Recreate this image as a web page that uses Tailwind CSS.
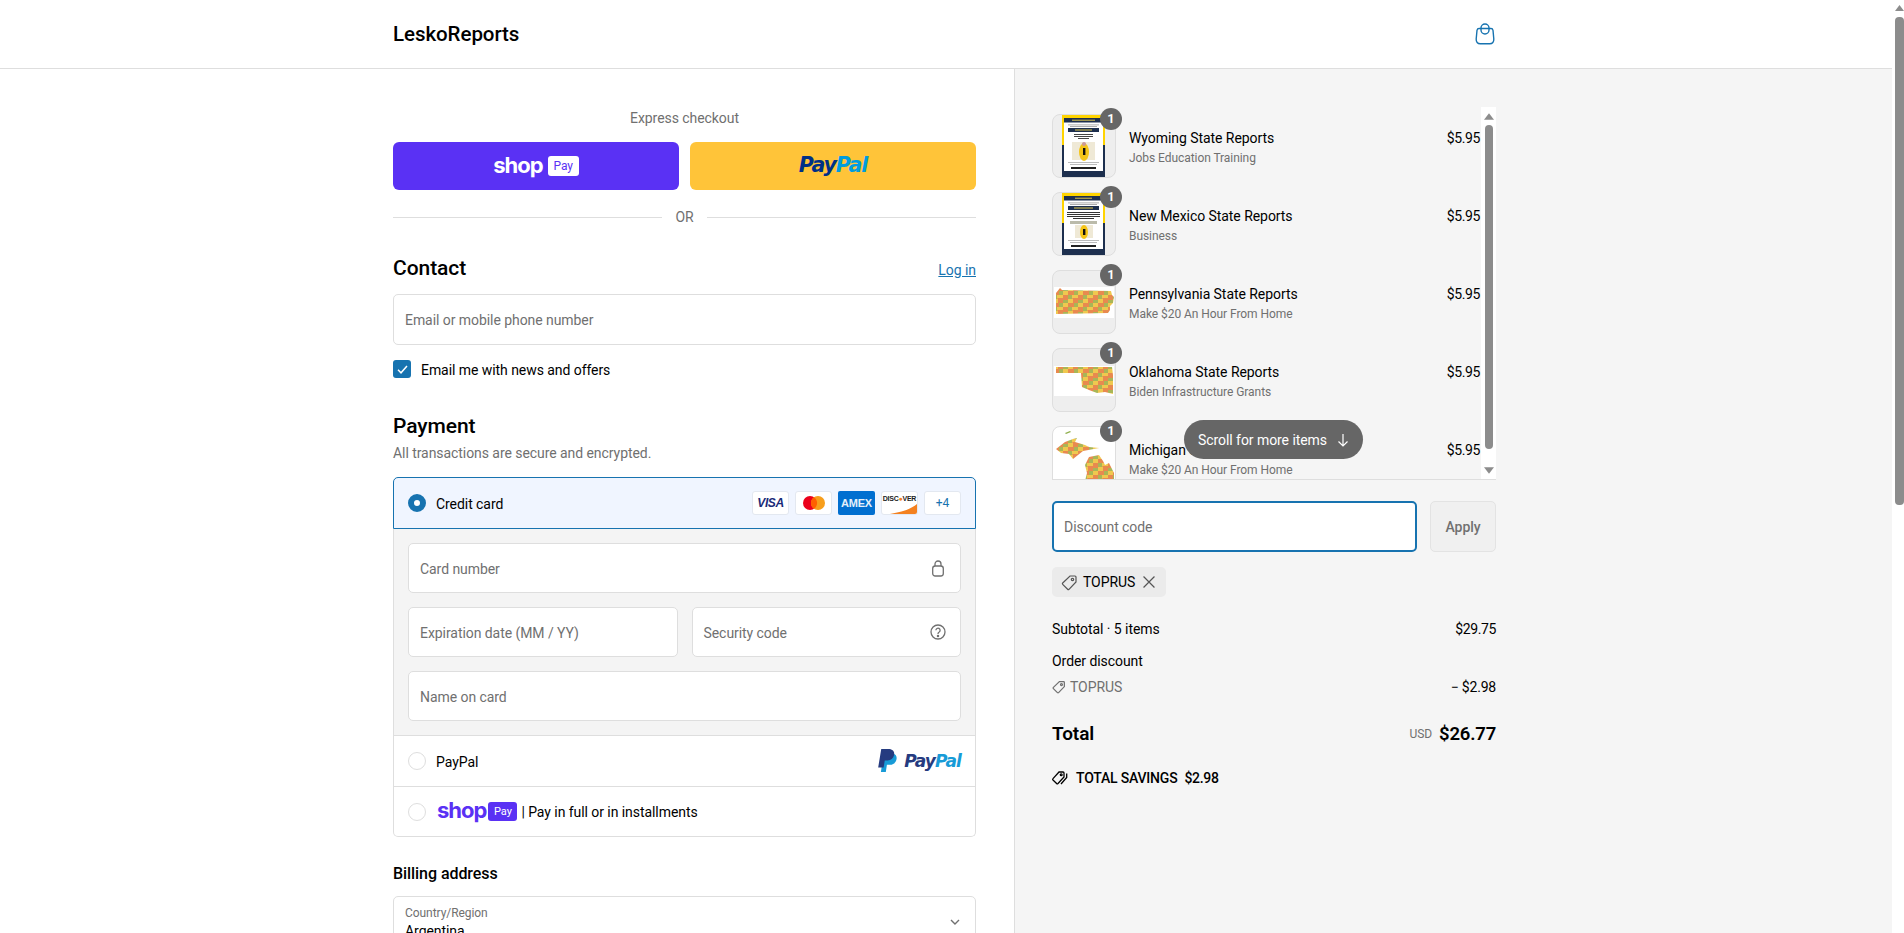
<!DOCTYPE html>
<html lang="en">
<head>
<meta charset="utf-8">
<title>Checkout</title>
<script src="https://cdn.jsdelivr.net/npm/@tailwindcss/browser@4"></script>
</head>
<body class="h-[933px] overflow-hidden bg-white font-['Roboto',sans-serif] text-[14px] leading-[20px] tracking-[-0.06px] text-black">
<svg class="absolute w-0 h-0" aria-hidden="true"><defs>
  <pattern id="counties" width="15" height="12" patternUnits="userSpaceOnUse">
    <rect width="15" height="12" fill="#eda04c"/>
    <rect x="0" y="0" width="4" height="4" fill="#a9b657"/><rect x="4" y="0" width="6" height="3" fill="#f0c850"/><rect x="10" y="0" width="5" height="5" fill="#e88a50"/>
    <rect x="0" y="4" width="5" height="4" fill="#f0c850"/><rect x="5" y="3" width="5" height="5" fill="#e88a50"/><rect x="10" y="5" width="5" height="3" fill="#a9b657"/>
    <rect x="0" y="8" width="6" height="4" fill="#e88a50"/><rect x="6" y="8" width="4" height="4" fill="#a9b657"/><rect x="10" y="8" width="5" height="4" fill="#f0c850"/>
  </pattern>
  <filter id="soft" x="-5%" y="-5%" width="110%" height="110%"><feGaussianBlur stdDeviation="0.4"/></filter>
</defs></svg>
<div class="flex h-[933px]">
  <div class="w-[1892px] h-[933px] overflow-hidden">
    <header class="h-[69px] border-b border-[#dedede] pl-[393px] pr-[396px] flex items-center justify-between">
      <span class="text-[20.5px] font-medium leading-[28px]">LeskoReports</span>
      <svg class="w-[20px] h-[22px] mr-[1px]" viewBox="0 0 20 22" fill="none" stroke="#1773b0" stroke-width="1.400"><path d="M4 5.500h12c1 0 1.800.8 2 1.800l.8 8.700c.2 2.800-1.400 4.800-4 4.800H5.200c-2.600 0-4.200-2-4-4.800L2 7.300c.2-1 1-1.800 2-1.800z"/><rect x="6" y="1" width="8" height="10" rx="4"/></svg>
    </header>
    <div class="flex h-[864px]">
      <main class="w-[1015px] border-r border-[#dedede] pl-[393px] pr-[38px] pt-[39px]">
        <div class="text-center text-[#707070]">Express checkout</div>
        <div class="flex gap-[11px] mt-[14px]">
          <div class="flex-1 h-[48px] rounded-[6px] bg-[#5a31f4] flex items-center justify-center gap-[5px]">
            <span class="font-['Inter'] font-bold text-white text-[22px] leading-[24px] tracking-[-1px] mt-[-3px]">shop</span>
            <span class="bg-white text-[#5a31f4] rounded-[3px] w-[31px] h-[20px] text-[12px] leading-[20px] text-center">Pay</span>
          </div>
          <div class="flex-1 h-[48px] rounded-[6px] bg-[#ffc439] flex items-center justify-center">
            <span class="font-['DejaVu_Sans'] font-bold italic text-[20.5px] leading-[24px] tracking-[-1.1px] text-[#003087] mt-[-2px]">Pay<span class="text-[#009cde]">Pal</span></span>
          </div>
        </div>
        <div class="flex items-center mt-[17px] text-[#707070]">
          <div class="flex-1 h-px bg-[#dedede]"></div><span class="px-[13px]">OR</span><div class="flex-1 h-px bg-[#dedede]"></div>
        </div>
        <div class="flex items-end justify-between mt-[28px]">
          <h2 class="text-[21px] font-medium leading-[26px]">Contact</h2>
          <a class="text-[#1773b0] underline mb-[1px]">Log in</a>
        </div>
        <div class="mt-[13px] h-[51px] rounded-[5px] border border-[#dedede] flex items-center px-[11px] pt-[1px] text-[#707070]">Email or mobile phone number</div>
        <div class="mt-[15px] flex items-center gap-[10px] h-[18px]">
          <span class="w-[18px] h-[18px] rounded-[3px] bg-[#1773b0] flex items-center justify-center">
            <svg class="w-[11px] h-[9px]" viewBox="0 0 11 9" fill="none" stroke="#fff" stroke-width="1.500"><path d="M1 4.800l3 3 6-6.800"/></svg>
          </span>
          <span class="mt-[1px]">Email me with news and offers</span>
        </div>
        <h2 class="mt-[35px] text-[21px] font-medium leading-[26px]">Payment</h2>
        <p class="mt-[4px] text-[#707070]">All transactions are secure and encrypted.</p>
        <div class="mt-[14px] w-[583px]">
          <div class="h-[52px] rounded-t-[5px] border border-[#1773b0] bg-[#f0f5ff] flex items-center pl-[14px] pr-[14px]">
            <span class="w-[18px] h-[18px] rounded-full border-[6px] border-[#1773b0] bg-white"></span>
            <span class="ml-[10px] mt-[1px]">Credit card</span>
            <div class="ml-auto flex gap-[6px]">
              <span class="w-[37px] h-[24px] rounded-[3px] bg-white border border-[#e3e8f0] flex items-center justify-center font-['Liberation_Sans'] font-bold italic text-[12px] tracking-[-0.4px] text-[#1a2a78]">VISA</span>
              <span class="w-[37px] h-[24px] rounded-[3px] bg-white border border-[#e3e8f0] flex items-center justify-center">
                <svg class="w-[24px] h-[16px]" viewBox="0 0 24 16"><circle cx="8" cy="8" r="7" fill="#eb001b"/><circle cx="16" cy="8" r="7" fill="#f79e1b"/><path d="M12 2.200a7 7 0 0 1 0 11.600a7 7 0 0 1 0-11.600z" fill="#ff5f00"/></svg>
              </span>
              <span class="w-[37px] h-[24px] rounded-[2px] bg-[#016fd0] flex items-center justify-center font-['Liberation_Sans'] font-bold text-[11px] text-white/90 tracking-[-0.2px]">AMEX</span>
              <span class="relative w-[37px] h-[24px] rounded-[3px] bg-white border border-[#e3e8f0] overflow-hidden font-['Liberation_Sans'] font-bold text-[7px] leading-[13px] text-[#222] text-center whitespace-nowrap tracking-[-0.25px]">DISC<span class="text-[#f48120]">●</span>VER
                <svg class="absolute left-0 bottom-0 w-[35px] h-[22px]" viewBox="0 0 35 22"><path d="M8 22C20 20 29 17 35 12v10z" fill="#f48120"/></svg>
              </span>
              <span class="w-[37px] h-[24px] rounded-[3px] bg-white border border-[#e3e8f0] flex items-center justify-center text-[12px] text-[#1773b0]">+4</span>
            </div>
          </div>
          <div class="bg-[#f4f4f4] border-x border-[#dedede] py-[14px] px-[14px] flex flex-col gap-[14px]">
            <div class="h-[50px] rounded-[5px] border border-[#dedede] bg-white flex items-center justify-between pl-[11px] pr-[15px] text-[#707070]">
              <span class="mt-[1px]">Card number</span>
              <svg class="w-[14px] h-[17px]" viewBox="0 0 14 17" fill="none" stroke="#707070" stroke-width="1.300"><rect x="1.700" y="6" width="10.600" height="10" rx="2.500"/><path d="M4 6V4a3 3 0 0 1 6 0v2"/></svg>
            </div>
            <div class="grid grid-cols-2 gap-[14px]">
              <div class="h-[50px] rounded-[5px] border border-[#dedede] bg-white flex items-center pl-[11px] pt-[1px] text-[#707070]">Expiration date (MM / YY)</div>
              <div class="h-[50px] rounded-[5px] border border-[#dedede] bg-white flex items-center justify-between pl-[11px] pr-[14px] text-[#707070]">
                <span class="mt-[1px]">Security code</span>
                <svg class="w-[16px] h-[16px]" viewBox="0 0 16 16" fill="none" stroke="#707070" stroke-width="1.300"><circle cx="8" cy="8" r="7"/><path d="M5.900 6.200a2.100 2.100 0 1 1 3.300 1.800c-.8.500-1.200 1-1.200 1.900"/><circle cx="8" cy="12" r=".6" fill="#707070"/></svg>
              </div>
            </div>
            <div class="h-[50px] rounded-[5px] border border-[#dedede] bg-white flex items-center pl-[11px] pt-[1px] text-[#707070]">Name on card</div>
          </div>
          <div class="h-[52px] border border-[#dedede] flex items-center pl-[14px] pr-[14px]">
            <span class="w-[18px] h-[18px] rounded-full border border-[#dedede] bg-white"></span>
            <span class="ml-[10px] mt-[1px]">PayPal</span>
            <span class="ml-auto flex items-center gap-[6px]">
              <svg class="w-[20px] h-[24px]" viewBox="0 0 18 22"><path d="M5 4h6.500c3.500 0 6 1.800 5.300 5.500-.6 3.300-3 5-6 5H8L7 21H2.500z" fill="#179bd7"/><path d="M2.800 0h6.500c3.500 0 6 1.800 5.300 5.500-.6 3.300-3 5-6 5H6L5 17H0z" fill="#253b80"/></svg>
              <span class="font-['DejaVu_Sans'] font-bold italic text-[17px] leading-[22px] tracking-[-0.9px] text-[#253b80]">Pay<span class="text-[#179bd7]">Pal</span></span>
            </span>
          </div>
          <div class="h-[50px] rounded-b-[5px] border-x border-b border-[#dedede] flex items-center pl-[14px] pr-[14px]">
            <span class="w-[18px] h-[18px] rounded-full border border-[#dedede] bg-white"></span>
            <span class="ml-[11px] font-['Inter'] font-bold text-[#5a31f4] text-[22px] leading-[24px] tracking-[-1px] mt-[-3px]">shop</span>
            <span class="ml-[2px] bg-[#5a31f4] text-white rounded-[3px] w-[29px] h-[19px] text-[11px] leading-[19px] text-center">Pay</span>
            <span class="ml-[4px] mt-[1px]">| Pay in full or in installments</span>
          </div>
        </div>
        <h3 class="mt-[26px] text-[16px] font-medium leading-[22px]">Billing address</h3>
        <div class="relative mt-[11px] h-[60px] rounded-[5px] border border-[#dedede] px-[11px] pt-[8px]">
          <div class="text-[12px] leading-[17px] text-[#707070]">Country/Region</div>
          <div class="leading-[19px]">Argentina</div>
          <svg class="absolute right-[15px] top-[22px] w-[10px] h-[6px]" viewBox="0 0 10 6" fill="none" stroke="#707070" stroke-width="1.400"><path d="M1 1l4 4 4-4"/></svg>
        </div>
      </main>
      <aside class="flex-1 bg-[#f5f5f5] pl-[37px] pt-[38px]">
        <div class="w-[444px]">
          <div class="relative flex h-[373px] overflow-hidden border-b border-[#dedede]">
            <div class="w-[429px] pt-[7px] flex flex-col gap-[14px]">
              <div class="flex items-center shrink-0">
                <div class="relative w-[64px] h-[64px] shrink-0 rounded-[8px] border border-[#dedede] bg-[#eeeeee]">
                  <svg class="absolute inset-0 w-[62px] h-[62px] rounded-[7px]" viewBox="0 0 62 62">
                    <rect x="9" y="0" width="43" height="62" fill="#1d2f4e"/><rect x="9" y="0" width="43" height="30" fill="#ffd400"/>
                    <rect x="11" y="3" width="39" height="53" fill="#fff"/><rect x="11" y="3" width="39" height="4.500" fill="#1d2f4e"/><rect x="19" y="4.700" width="23" height="1" fill="#d8c050"/>
                    <rect x="15" y="9.500" width="31" height=".8" fill="#999"/><rect x="17" y="11" width="27" height=".8" fill="#999"/>
                    <rect x="15" y="13" width="31" height="4" fill="#1d2f4e"/><rect x="22" y="14.500" width="17" height="1" fill="#e0c84a"/>
                    <rect x="21" y="19" width="19" height="1" fill="#444"/><rect x="21" y="21" width="19" height="1" fill="#444"/><rect x="25" y="23" width="11" height="1" fill="#444"/>
                    <rect x="19" y="27" width="23" height="18" fill="#efe9d6"/><ellipse cx="31" cy="37" rx="5" ry="9" fill="#f5c518"/><rect x="30" y="33" width="2.400" height="7" fill="#111"/><circle cx="31" cy="29" r="2" fill="#c99"/>
                    <rect x="15" y="47" width="31" height=".8" fill="#aaa"/><rect x="17" y="49" width="27" height=".8" fill="#aaa"/><rect x="18" y="52" width="25" height="2" fill="#222"/>
                  </svg>
                  <span class="absolute right-[-7px] top-[-7px] w-[22px] h-[22px] rounded-full bg-[#666666] text-white text-[13px] font-semibold leading-[22px] text-center">1</span>
                </div>
                <div class="ml-[13px] mt-[4px]"><div class="leading-[20px]">Wyoming State Reports</div><div class="text-[12px] leading-[20px] text-[#707070]">Jobs Education Training</div></div>
                <div class="ml-auto self-start mt-[14px] pr-[1px] tracking-[-0.4px]">$5.95</div>
              </div>
              <div class="flex items-center shrink-0">
                <div class="relative w-[64px] h-[64px] shrink-0 rounded-[8px] border border-[#dedede] bg-[#eeeeee]">
                  <svg class="absolute inset-0 w-[62px] h-[62px] rounded-[7px]" viewBox="0 0 62 62">
                    <rect x="9" y="0" width="43" height="62" fill="#1d2f4e"/><rect x="9" y="0" width="43" height="30" fill="#ffd400"/>
                    <rect x="11" y="3" width="39" height="53" fill="#fff"/><rect x="11" y="3" width="39" height="4.500" fill="#1d2f4e"/><rect x="22" y="4.700" width="17" height="1" fill="#d8c050"/>
                    <rect x="15" y="9.500" width="31" height=".8" fill="#999"/><rect x="17" y="11" width="27" height=".8" fill="#999"/>
                    <rect x="15" y="13" width="31" height="4" fill="#1d2f4e"/><rect x="21" y="14.500" width="19" height="1" fill="#e0c84a"/>
                    <rect x="14" y="19" width="33" height="1" fill="#333"/><rect x="14" y="21" width="33" height="1" fill="#333"/><rect x="14" y="23" width="33" height="1" fill="#333"/><rect x="20" y="25" width="21" height="1" fill="#333"/>
                    <rect x="17" y="28" width="27" height="3" fill="#bba"/>
                    <rect x="22" y="32" width="18" height="13" fill="#efe9d6"/><ellipse cx="31" cy="39" rx="4" ry="7" fill="#f5c518"/><rect x="30" y="36" width="2.400" height="6" fill="#111"/>
                    <rect x="15" y="47" width="31" height=".8" fill="#aaa"/><rect x="17" y="49" width="27" height=".8" fill="#aaa"/><rect x="18" y="52" width="25" height="2" fill="#222"/>
                  </svg>
                  <span class="absolute right-[-7px] top-[-7px] w-[22px] h-[22px] rounded-full bg-[#666666] text-white text-[13px] font-semibold leading-[22px] text-center">1</span>
                </div>
                <div class="ml-[13px] mt-[4px]"><div class="leading-[20px]">New Mexico State Reports</div><div class="text-[12px] leading-[20px] text-[#707070]">Business</div></div>
                <div class="ml-auto self-start mt-[14px] pr-[1px] tracking-[-0.4px]">$5.95</div>
              </div>
              <div class="flex items-center shrink-0">
                <div class="relative w-[64px] h-[64px] shrink-0 rounded-[8px] border border-[#dedede] bg-[#eeeeee]">
                  <svg class="absolute inset-0 w-[62px] h-[62px] rounded-[7px]" viewBox="0 0 62 62"><rect x="1" y="16" width="60" height="31" fill="#fff"/><path d="M3 22l4-5 2 2 49 1 1 4 2 2-1 6-3 3 0 4-2 3-52 1z" fill="url(#counties)" filter="url(#soft)"/></svg>
                  <span class="absolute right-[-7px] top-[-7px] w-[22px] h-[22px] rounded-full bg-[#666666] text-white text-[13px] font-semibold leading-[22px] text-center">1</span>
                </div>
                <div class="ml-[13px] mt-[4px]"><div class="leading-[20px]">Pennsylvania State Reports</div><div class="text-[12px] leading-[20px] text-[#707070]">Make $20 An Hour From Home</div></div>
                <div class="ml-auto self-start mt-[14px] pr-[1px] tracking-[-0.4px]">$5.95</div>
              </div>
              <div class="flex items-center shrink-0">
                <div class="relative w-[64px] h-[64px] shrink-0 rounded-[8px] border border-[#dedede] bg-[#eeeeee]">
                  <svg class="absolute inset-0 w-[62px] h-[62px] rounded-[7px]" viewBox="0 0 62 62"><rect x="1" y="17" width="60" height="30" fill="#fff"/><path d="M3 18h56l1 8v19l-8-2-8 1-8-3-7-3-1-14H3z" fill="url(#counties)" filter="url(#soft)"/></svg>
                  <span class="absolute right-[-7px] top-[-7px] w-[22px] h-[22px] rounded-full bg-[#666666] text-white text-[13px] font-semibold leading-[22px] text-center">1</span>
                </div>
                <div class="ml-[13px] mt-[4px]"><div class="leading-[20px]">Oklahoma State Reports</div><div class="text-[12px] leading-[20px] text-[#707070]">Biden Infrastructure Grants</div></div>
                <div class="ml-auto self-start mt-[14px] pr-[1px] tracking-[-0.4px]">$5.95</div>
              </div>
              <div class="flex items-center shrink-0">
                <div class="relative w-[64px] h-[64px] shrink-0 rounded-[8px] border border-[#dedede] bg-white">
                  <svg class="absolute inset-0 w-[62px] h-[62px] rounded-[7px]" viewBox="0 0 62 62"><path d="M12 6l5-2 1 1-5 2z" fill="#8fb04d"/><path d="M3 22l9-7 8-3 4-1-2 4 10 3 4 2 10 1-16 3-5 4-5 4-4-5-8-1z" fill="url(#counties)" filter="url(#soft)"/><path d="M36 30l10-2 4 6 2 4 4-2 5 10v16H30l4-16-2-8z" fill="url(#counties)" filter="url(#soft)"/></svg>
                  <span class="absolute right-[-7px] top-[-7px] w-[22px] h-[22px] rounded-full bg-[#666666] text-white text-[13px] font-semibold leading-[22px] text-center">1</span>
                </div>
                <div class="ml-[13px] mt-[4px]"><div class="leading-[20px]">Michigan State Reports</div><div class="text-[12px] leading-[20px] text-[#707070]">Make $20 An Hour From Home</div></div>
                <div class="ml-auto self-start mt-[14px] pr-[1px] tracking-[-0.4px]">$5.95</div>
              </div>
            </div>
            <div class="w-[15px] bg-white flex flex-col items-center">
              <svg class="w-[10px] h-[7px] mt-[6px]" viewBox="0 0 9 6"><path d="M4.500 0L9 6H0z" fill="#8c8c8c"/></svg>
              <div class="w-[8px] h-[324px] rounded-[4px] bg-[#8c8c8c] mt-[5px]"></div>
              <svg class="w-[10px] h-[7px] mt-[18px]" viewBox="0 0 9 6"><path d="M0 0h9L4.500 6z" fill="#8c8c8c"/></svg>
            </div>
            <div class="absolute left-[132px] top-[313px] w-[179px] h-[39px] rounded-full bg-[#666666] text-white flex items-center pl-[14px] gap-[10px]">
              <span>Scroll for more items</span>
              <svg class="w-[12px] h-[14px]" viewBox="0 0 12 14" fill="none" stroke="#fff" stroke-width="1.200"><path d="M6 1v12M1.500 8.500L6 13l4.500-4.500"/></svg>
            </div>
          </div>
          <div class="flex gap-[13px] mt-[21px]">
            <div class="w-[365px] h-[51px] rounded-[5px] border-2 border-[#1773b0] bg-white flex items-center pl-[10px] text-[#707070]">Discount code</div>
            <div class="flex-1 h-[51px] rounded-[5px] border border-[#e3e3e3] bg-[#f0f0f0] flex items-center justify-center font-medium text-[#707070]">Apply</div>
          </div>
          <div class="mt-[15px] inline-flex items-center h-[30px] w-[114px] rounded-[5px] bg-[#ebebeb] pl-[9px] gap-[5px]">
            <svg class="w-[17px] h-[17px]" viewBox="0 0 17 17" fill="none" stroke="#555" stroke-width="1.200"><path d="M9 2h5a1 1 0 0 1 1 1v5l-7 7.300a1 1 0 0 1-1.400 0L1.700 10.400a1 1 0 0 1 0-1.400z"/><circle cx="11.500" cy="5.500" r="1.200"/></svg>
            <span>TOPRUS</span>
            <svg class="w-[12px] h-[12px] ml-[3px]" viewBox="0 0 11 11" fill="none" stroke="#555" stroke-width="1.100"><path d="M.5.500l10 10M10.500.500l-10 10"/></svg>
          </div>
          <div class="flex justify-between mt-[22px]"><span>Subtotal · 5 items</span><span class="tracking-[-0.4px]">$29.75</span></div>
          <div class="mt-[12px]">Order discount</div>
          <div class="flex justify-between mt-[6px]">
            <span class="flex items-center gap-[4px] text-[#707070]"><svg class="w-[14px] h-[14px]" viewBox="0 0 17 17" fill="none" stroke="#707070" stroke-width="1.500"><path d="M9 2h5a1 1 0 0 1 1 1v5l-7 7.300a1 1 0 0 1-1.400 0L1.700 10.400a1 1 0 0 1 0-1.400z"/><circle cx="11.500" cy="5.500" r="1.200"/></svg>TOPRUS</span>
            <span class="tracking-[-0.2px]">− $2.98</span>
          </div>
          <div class="flex justify-between items-center mt-[24px] leading-[26px]">
            <span class="text-[19px] font-semibold">Total</span>
            <span class="flex items-center gap-[7px]"><span class="text-[12px] text-[#707070]">USD</span><span class="text-[18.5px] font-semibold tracking-[-0.2px]">$26.77</span></span>
          </div>
          <div class="flex items-center mt-[21px] font-medium">
            <svg class="w-[17px] h-[15px] mr-[7px]" viewBox="0 0 17 15" fill="none" stroke="#000" stroke-width="1.300"><path d="M7 1h4a1 1 0 0 1 1 1v4l-6 6.500a1 1 0 0 1-1.400 0L1 9a1 1 0 0 1 0-1.400z"/><circle cx="9.200" cy="3.800" r=".9"/><path d="M14.700 2.500v4L9 13"/></svg>
            <span class="tracking-[-0.2px]">TOTAL SAVINGS</span><span class="ml-[7px] tracking-[-0.3px]">$2.98</span>
          </div>
        </div>
      </aside>
    </div>
  </div>
  <div class="w-[12px] h-[933px] bg-white flex flex-col items-end">
    <svg class="w-[9px] h-[6px] mt-[5px]" viewBox="0 0 9 6"><path d="M4.500 0L9 6H0z" fill="#8c8c8c"/></svg>
    <div class="w-[9px] h-[488px] rounded-[4px] bg-[#8c8c8c] mt-[6px]"></div>
  </div>
</div>
</body>
</html>
